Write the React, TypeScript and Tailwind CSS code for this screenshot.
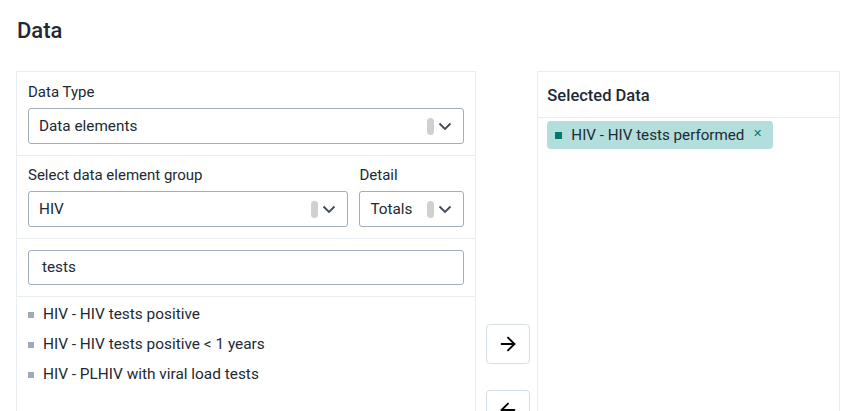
import { ArrowRight, ArrowLeft } from "lucide-react";

function Chevron() {
  return (
    <svg width="14" height="9" viewBox="0 0 14 9" fill="none">
      <path d="M1.5 1.5 L7 7 L12.5 1.5" stroke="#404b5a" strokeWidth="1.8" />
    </svg>
  );
}

function Select({ value, className }: { value: string; className?: string }) {
  return (
    <div
      className={`flex items-center h-[36px] rounded-[3px] border border-[#a0adba] pl-[10px] pr-[11px] ${className ?? ""}`}
    >
      <span className="flex-1 text-[15.3px] text-[#212934]">{value}</span>
      <span className="w-[7px] h-[17px] rounded-[4px] bg-[#d0d0d0] mr-[4px]" />
      <Chevron />
    </div>
  );
}

const items = [
  "HIV - HIV tests positive",
  "HIV - HIV tests positive < 1 years",
  "HIV - PLHIV with viral load tests",
];

export default function App() {
  return (
    <div className="h-[411px] overflow-hidden bg-white font-['Roboto',sans-serif] text-[#212934]">
      <h1 className="pl-[17px] pt-[18px] text-[22px] font-medium leading-[26px] text-[#212934]">
        Data
      </h1>

      <div className="flex mt-[27px] pl-[16px] pr-[10px]">
        <div className="w-[461px] h-[400px] border border-[#e8edf2]">
          <div className="px-[11px] pt-[11px] pb-[11px] border-b border-[#e8edf2]">
            <div className="text-[15px] leading-[18px] mb-[7px]">Data Type</div>
            <Select value="Data elements" />
          </div>

          <div className="flex gap-[11px] px-[11px] pt-[10px] pb-[11px] border-b border-[#e8edf2]">
            <div className="flex-1">
              <div className="text-[15px] leading-[18px] mb-[7px]">
                Select data element group
              </div>
              <Select value="HIV" />
            </div>
            <div className="w-[105px]">
              <div className="text-[15px] leading-[18px] mb-[7px]">Detail</div>
              <Select value="Totals" />
            </div>
          </div>

          <div className="px-[11px] pt-[11px] pb-[11px] border-b border-[#e8edf2]">
            <div className="h-[35px] flex items-center rounded-[3px] border border-[#a0adba] pl-[13px] text-[15.3px]">
              tests
            </div>
          </div>

          <ul className="px-[11px] pt-[3px]">
            {items.map((t) => (
              <li key={t} className="flex items-center h-[30px] text-[15.4px]">
                <span className="w-[6px] h-[6px] bg-[#a0aab5] mr-[9px]" />
                {t}
              </li>
            ))}
          </ul>
        </div>

        <div className="w-[61px] flex flex-col items-center pt-[253px] gap-[26px]">
          <div className="w-[44px] h-[40px] ml-[2px] flex items-center justify-center rounded-[4px] border border-[#d5dde5] bg-white">
            <ArrowRight size={22} strokeWidth={2} color="#000" />
          </div>
          <div className="w-[44px] h-[40px] ml-[2px] flex items-center justify-center rounded-[4px] border border-[#d5dde5] bg-white">
            <ArrowLeft size={22} strokeWidth={2} color="#000" />
          </div>
        </div>

        <div className="w-[303px] h-[400px] border border-[#e8edf2]">
          <div className="h-[46px] flex items-center px-[9px] pt-[3px] border-b border-[#e8edf2] text-[16.5px] font-medium">
            Selected Data
          </div>
          <div className="px-[9px] pt-[3px]">
            <div className="inline-flex items-center h-[28px] rounded-[4px] bg-[#b2dfdb] pl-[8px] pr-[11px]">
              <span className="w-[7px] h-[7px] bg-[#00796b] mr-[9px]" />
              <span className="text-[15.2px] text-[#212934]">HIV - HIV tests performed</span>
              <span className="ml-[9px] text-[11px] text-[#00796b] leading-none -mt-[3px]">✕</span>
            </div>
          </div>
        </div>
      </div>
    </div>
  );
}
